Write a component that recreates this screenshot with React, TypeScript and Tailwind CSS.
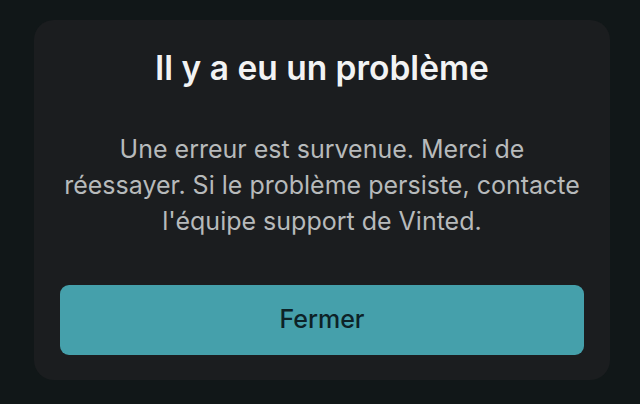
export default function App() {
  return (
    <div className="w-[640px] h-[404px] bg-[#111718] pt-[20px] pl-[34px]" style={{ fontFamily: "Inter, 'Noto Sans', sans-serif" }}>
      <div className="w-[576px] h-[360px] bg-[#1b1d1f] rounded-[20px] flex flex-col items-center pt-[28px] px-[25px]">
        <h1 className="text-[33.5px] leading-[40px] font-semibold text-[#f2f3f3] whitespace-nowrap">Il y a eu un problème</h1>
        <p className="mt-[43px] text-[25px] leading-[36px] text-[#b7babb] text-center whitespace-nowrap">
          Une erreur est survenue. Merci de<br />réessayer. Si le problème persiste, contacte<br />l'équipe support de Vinted.
        </p>
        <button className="mt-[46px] w-[524px] h-[70px] shrink-0 rounded-[9px] bg-[#45a0ab] text-[#0d2227] text-[25px] font-medium flex items-center justify-center">
          Fermer
        </button>
      </div>
    </div>
  );
}
